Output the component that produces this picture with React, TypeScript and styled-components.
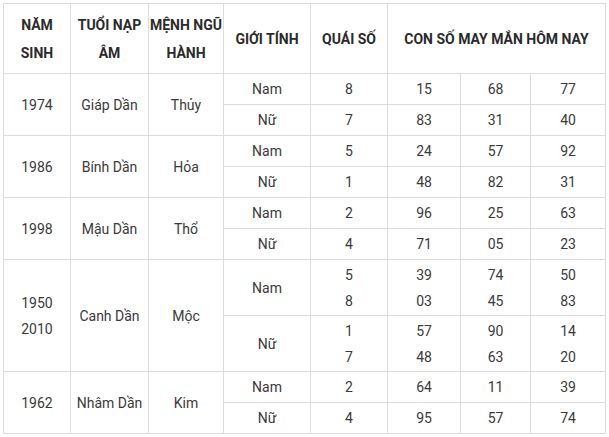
import React from "react";
import styled, { createGlobalStyle } from "styled-components";

const Global = createGlobalStyle`
  html, body { margin: 0; padding: 0; background: #fff; }
  body { font-family: Roboto, "Liberation Sans", Arial, sans-serif; }
`;

const Wrap = styled.div`
  padding: 3px 5px 3px 3px;
`;

const Table = styled.table`
  width: 602px;
  border-collapse: collapse;
  table-layout: fixed;
  font-family: Roboto, "Liberation Sans", Arial, sans-serif;
  font-size: 14px;
  color: #333;
`;

const HeadCell = styled.th`
  border: 1px solid #dcdcdc;
  font-weight: 700;
  color: #2b2b2b;
  line-height: 28px;
  padding: 6px 0;
  text-align: center;
  vertical-align: middle;
  white-space: nowrap;
`;

const Row = styled.tr<{ $h: number }>`
  height: ${(p) => p.$h}px;
`;

const Cell = styled.td`
  border: 1px solid #dcdcdc;
  font-weight: 400;
  color: #3a3a3a;
  line-height: 26px;
  padding: 0 2px;
  text-align: center;
  vertical-align: middle;
`;

const Line = styled.div`
  display: block;
`;

type GRow = { g: string; q: string[]; n: string[][] };
type Group = { year: string[]; tuoi: string; menh: string; rows: GRow[] };

const data: Group[] = [
  {
    year: ["1974"],
    tuoi: "Giáp Dần",
    menh: "Thủy",
    rows: [
      { g: "Nam", q: ["8"], n: [["15"], ["68"], ["77"]] },
      { g: "Nữ", q: ["7"], n: [["83"], ["31"], ["40"]] },
    ],
  },
  {
    year: ["1986"],
    tuoi: "Bính Dần",
    menh: "Hỏa",
    rows: [
      { g: "Nam", q: ["5"], n: [["24"], ["57"], ["92"]] },
      { g: "Nữ", q: ["1"], n: [["48"], ["82"], ["31"]] },
    ],
  },
  {
    year: ["1998"],
    tuoi: "Mậu Dần",
    menh: "Thổ",
    rows: [
      { g: "Nam", q: ["2"], n: [["96"], ["25"], ["63"]] },
      { g: "Nữ", q: ["4"], n: [["71"], ["05"], ["23"]] },
    ],
  },
  {
    year: ["1950", "2010"],
    tuoi: "Canh Dần",
    menh: "Mộc",
    rows: [
      { g: "Nam", q: ["5", "8"], n: [["39", "03"], ["74", "45"], ["50", "83"]] },
      { g: "Nữ", q: ["1", "7"], n: [["57", "48"], ["90", "63"], ["14", "20"]] },
    ],
  },
  {
    year: ["1962"],
    tuoi: "Nhâm Dần",
    menh: "Kim",
    rows: [
      { g: "Nam", q: ["2"], n: [["64"], ["11"], ["39"]] },
      { g: "Nữ", q: ["4"], n: [["95"], ["57"], ["74"]] },
    ],
  },
];

const Lines = ({ items }: { items: string[] }) => (
  <>
    {items.map((t, i) => (
      <Line key={i}>{t}</Line>
    ))}
  </>
);

export default function App() {
  return (
    <Wrap>
      <Global />
      <Table>
        <colgroup>
          <col style={{ width: 67 }} />
          <col style={{ width: 78 }} />
          <col style={{ width: 75 }} />
          <col style={{ width: 87 }} />
          <col style={{ width: 77 }} />
          <col style={{ width: 73 }} />
          <col style={{ width: 70 }} />
          <col style={{ width: 75 }} />
        </colgroup>
        <thead>
          <Row $h={70}>
            <HeadCell>
              NĂM
              <br />
              SINH
            </HeadCell>
            <HeadCell>
              TUỔI NẠP
              <br />
              ÂM
            </HeadCell>
            <HeadCell>
              MỆNH NGŨ
              <br />
              HÀNH
            </HeadCell>
            <HeadCell>GIỚI TÍNH</HeadCell>
            <HeadCell>QUÁI SỐ</HeadCell>
            <HeadCell colSpan={3}>CON SỐ MAY MẮN HÔM NAY</HeadCell>
          </Row>
        </thead>
        <tbody>
          {data.map((grp, gi) =>
            grp.rows.map((r, ri) => {
              const h = r.q.length > 1 ? 56 : 31;
              return (
                <Row key={`${gi}-${ri}`} $h={h}>
                  {ri === 0 && (
                    <>
                      <Cell rowSpan={grp.rows.length}>
                        <Lines items={grp.year} />
                      </Cell>
                      <Cell rowSpan={grp.rows.length}>{grp.tuoi}</Cell>
                      <Cell rowSpan={grp.rows.length}>{grp.menh}</Cell>
                    </>
                  )}
                  <Cell>{r.g}</Cell>
                  <Cell>
                    <Lines items={r.q} />
                  </Cell>
                  {r.n.map((col, ci) => (
                    <Cell key={ci}>
                      <Lines items={col} />
                    </Cell>
                  ))}
                </Row>
              );
            })
          )}
        </tbody>
      </Table>
    </Wrap>
  );
}
